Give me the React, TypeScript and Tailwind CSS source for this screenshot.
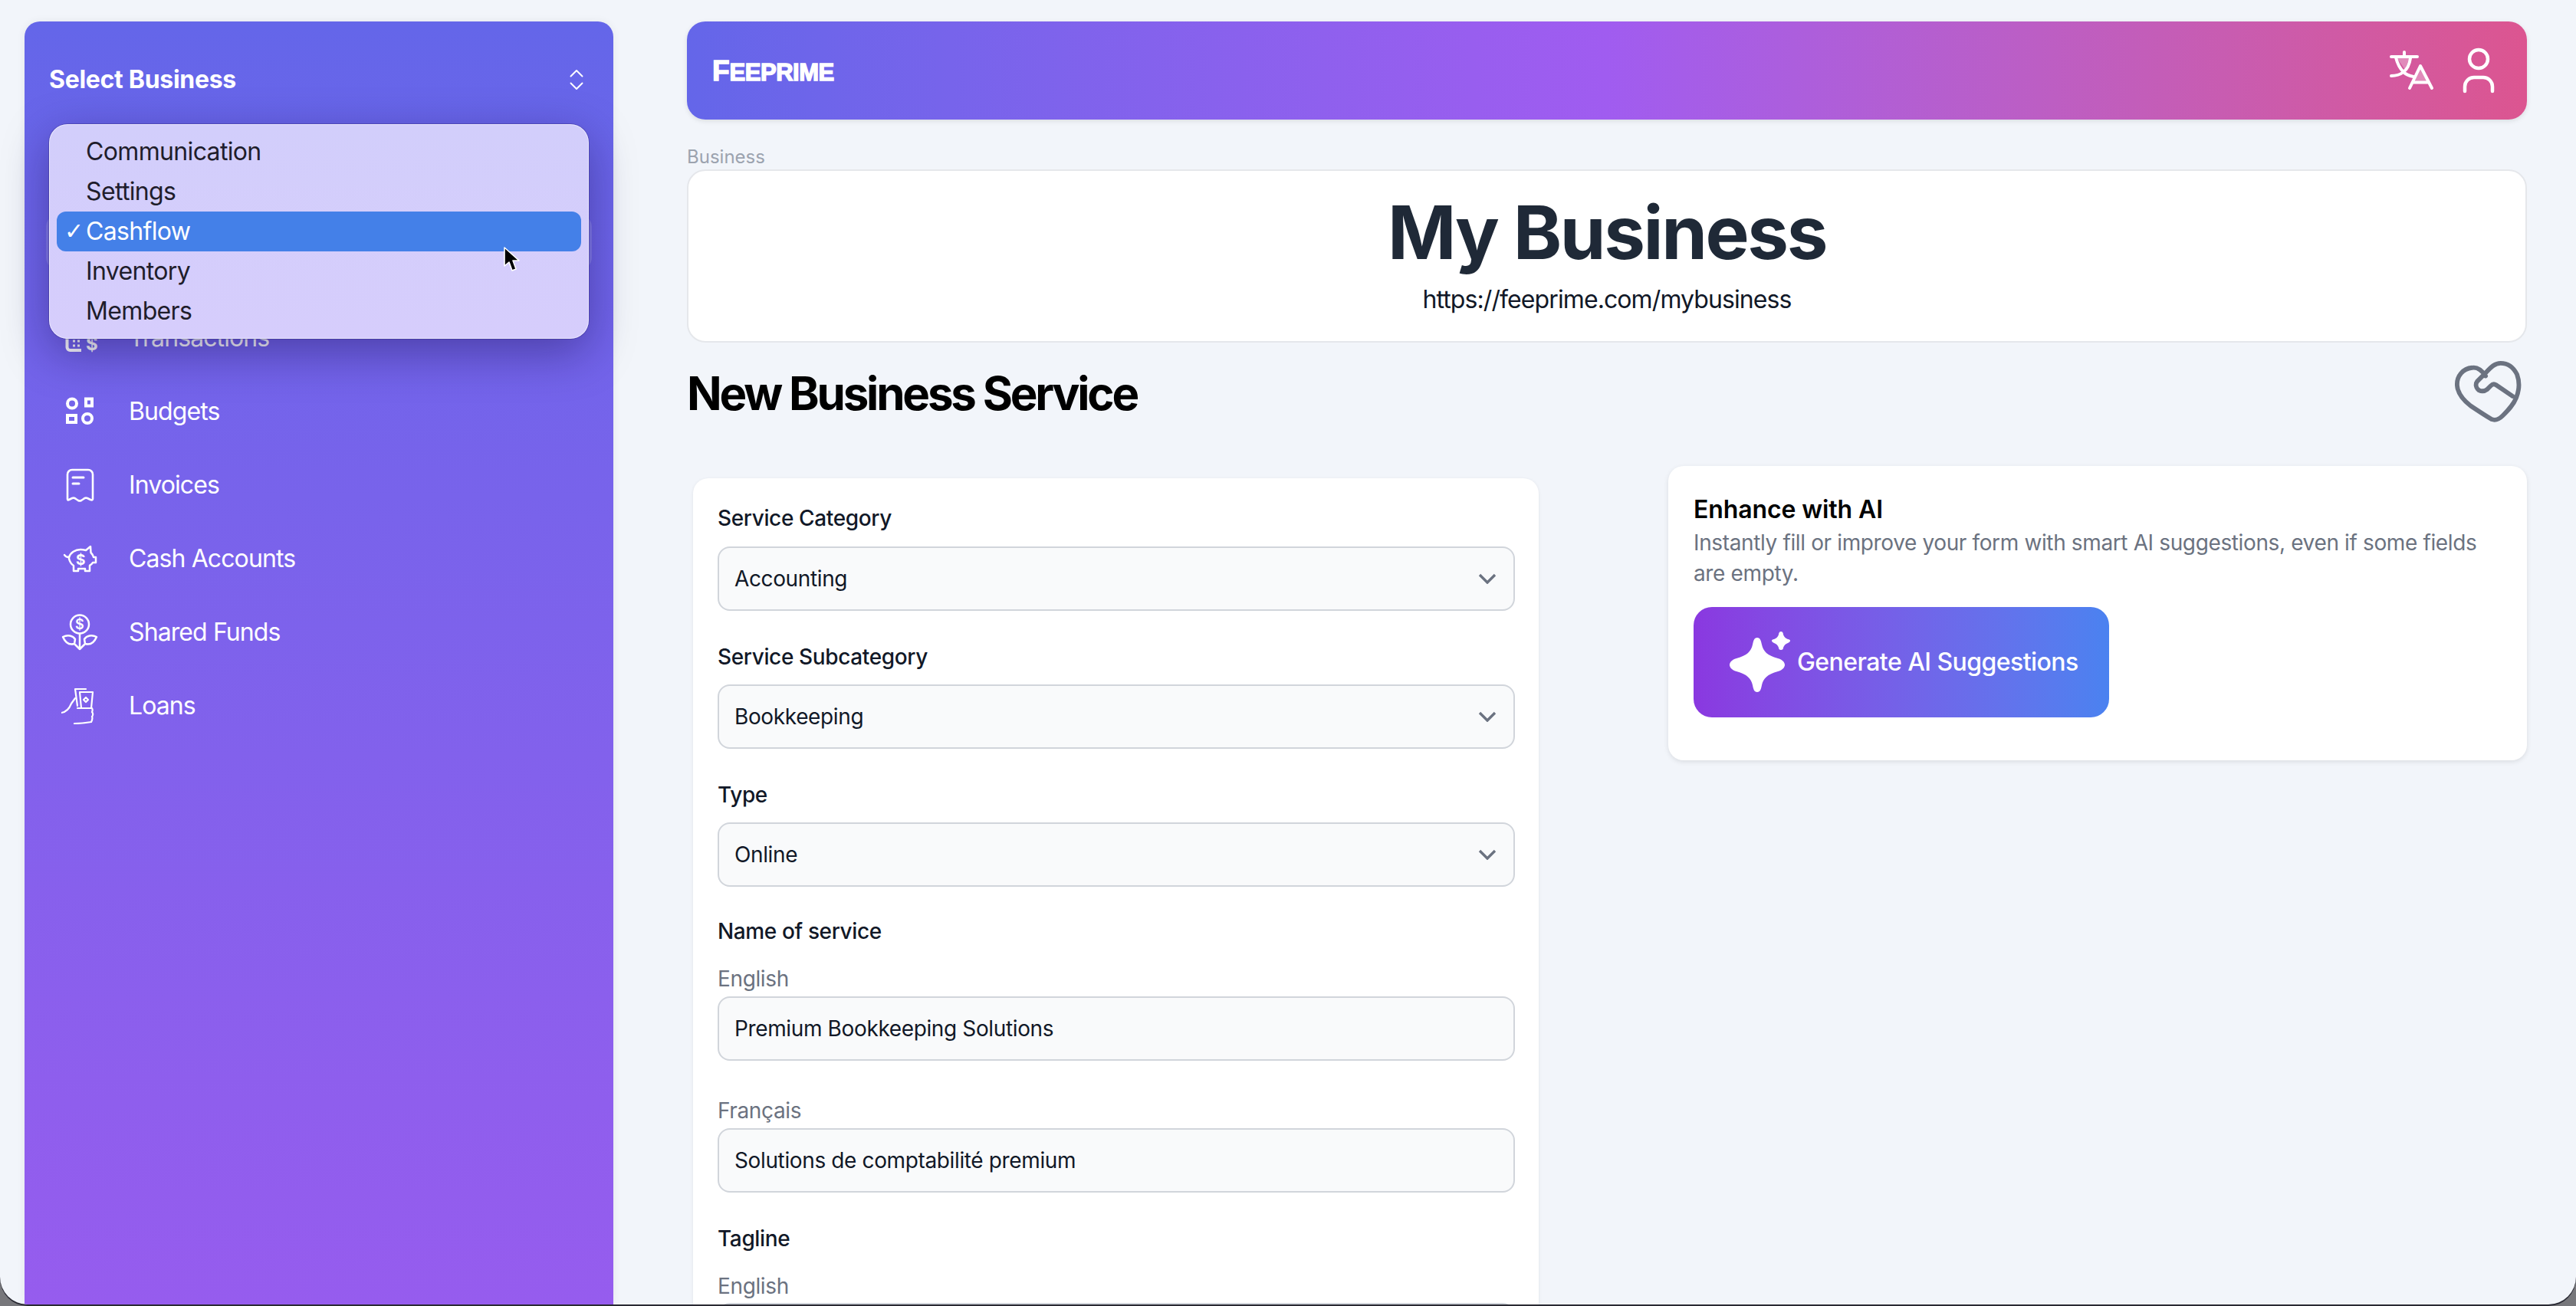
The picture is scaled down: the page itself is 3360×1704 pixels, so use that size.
import type { ReactNode } from "react";
import { ChevronsUpDown } from "lucide-react";
import { TbUser } from "react-icons/tb";

function BudgetsIcon() {
  return (
    <svg viewBox="0 0 48 48" className="h-12 w-12" fill="none" stroke="white" strokeWidth="4">
      <circle cx="14" cy="13.5" r="6" />
      <rect x="32" y="7.5" width="8" height="9" />
      <rect x="8" y="29" width="11" height="9" />
      <circle cx="34" cy="33" r="6" />
    </svg>
  );
}

function TransactionsIcon() {
  return (
    <svg viewBox="0 0 48 48" className="h-12 w-12" fill="none" stroke="white">
      <path d="M7.5 10v26a4 4 0 0 0 4 4H26" strokeWidth="4" />
      <path d="M15 28h3M21 28h3M15 34h3M21 34h3" strokeWidth="3" />
      <text x="32" y="40" fill="white" stroke="none" fontSize="24" fontWeight="700" fontFamily="Inter">
        $
      </text>
    </svg>
  );
}

function InvoicesIcon() {
  return (
    <svg viewBox="0 0 48 48" className="h-12 w-12" fill="none" stroke="white" strokeWidth="2.6" strokeLinejoin="round" strokeLinecap="round">
      <path d="M8 42V10a6 6 0 0 1 6-6h21a6 6 0 0 1 6 6v32q0 2-3 1l-4-2q-3-1-5 1l-3 2q-2 1-4 0l-3-2q-2-2-5-1l-4 2q-2 1-2-1Z" />
      <path d="M15 14h14M15 22h8" strokeWidth="3" />
    </svg>
  );
}

function PiggyIcon() {
  return (
    <svg viewBox="0 0 48 48" className="h-12 w-12" fill="none" stroke="white" strokeWidth="2.5" strokeLinejoin="round" strokeLinecap="round">
      <path d="M10 22c2-6 8-10 15-10 3 0 5 .5 7 1l6-5 .5 8c2 2 3 4 3.5 6h3v7h-4c-1 2-3 3-4 4v7h-6v-3h-9v3h-6v-7c-3-2-5-5-6-9Z" />
      <path d="M10 22c-3 0-5-1-6-3" />
      <text x="19" y="32" fill="white" stroke="none" fontSize="19" fontWeight="700" fontFamily="Inter">
        $
      </text>
    </svg>
  );
}

function FundsIcon() {
  return (
    <svg viewBox="0 0 48 48" className="h-12 w-12" fill="none" stroke="white" strokeWidth="2.5" strokeLinejoin="round" strokeLinecap="round">
      <circle cx="24" cy="13.5" r="12" />
      <text x="18" y="20" fill="white" stroke="none" fontSize="18" fontWeight="600" fontFamily="Inter">
        $
      </text>
      <path d="M24 26v20M18 40l6 6 6-6" />
      <path d="M2 30c6-3 13-2 16 3l-1 6c-7 2-12-2-15-9ZM46 30c-6-3-13-2-16 3l1 6c7 2 12-2 15-9Z" />
    </svg>
  );
}

function LoansIcon() {
  return (
    <svg viewBox="0 0 48 48" className="h-12 w-12" fill="none" stroke="white" strokeWidth="2.2" strokeLinejoin="round" strokeLinecap="round">
      <path d="M18 2h14M18 2l3 22" />
      <path d="M24 6h17l-2 21H26Z" />
      <path d="M32 13l3 3-3 3-3-3Z" />
      <path d="M18 14l-5 7c-2 5-6 11-13 12" />
      <path d="M21 27h19c1 2 1 3 0 5 2 2 1 5 0 6 1 2 0 5-1 7-6 1-14 2-22 2" />
    </svg>
  );
}

function HeartIcon() {
  return (
    <svg viewBox="0 0 90 82" className="h-20 w-[88px]" fill="none" stroke="#6b7280" strokeWidth="6" strokeLinejoin="round" strokeLinecap="round">
      <path d="M42 20C36 11 30 8 24 9 12 10 3 20 4 33c1 12 9 20 18 27 9 6 18 12 28 18 6 2 10 0 15-5 7-7 14-14 18-24 4-10 5-20 1-31C79 8 72 3 62 3c-7 0-12 4-20 13L31 27c-3 4-2 9 2 12 4 2 7 2 11-1l5-5c2-2 4-3 7-1l22 15" />
    </svg>
  );
}

function TranslateIcon() {
  return (
    <svg viewBox="0 0 60 54" className="h-[54px] w-[60px]" fill="none" stroke="white" strokeWidth="4" strokeLinecap="round" strokeLinejoin="round">
      <path d="M10 10h17l-6 16Z" fill="white" fillOpacity="0.3" stroke="none" />
      <path d="M41 22l10 20H31Z" fill="white" fillOpacity="0.3" stroke="none" />
      <path d="M3 9h34M20 3v6" />
      <path d="M9 10c2 8 5 14 10 19 3 3 8 5 13 6" />
      <path d="M28 11c-1 7-4 14-9 18-4 3-10 5-16 5" />
      <path d="M27 50l14-29 15 29M32 42.5h20" />
    </svg>
  );
}

function CursorIcon() {
  return (
    <svg viewBox="0 0 22 34" className="h-[34px] w-[22px]">
      <path d="M2 1v24l6-5 4 11 5-2-4-11h8Z" fill="black" stroke="white" strokeWidth="1.6" strokeLinejoin="round" />
    </svg>
  );
}

const navItems: { label: string; icon: ReactNode }[] = [
  { label: "Transactions", icon: <TransactionsIcon /> },
  { label: "Budgets", icon: <BudgetsIcon /> },
  { label: "Invoices", icon: <InvoicesIcon /> },
  { label: "Cash Accounts", icon: <PiggyIcon /> },
  { label: "Shared Funds", icon: <FundsIcon /> },
  { label: "Loans", icon: <LoansIcon /> },
];

const menuItems = ["Communication", "Settings", "Cashflow", "Inventory", "Members"];

function Sidebar() {
  return (
    <aside className="relative w-[768px] shrink-0 rounded-t-[20px] bg-linear-to-b from-[#6466e9] to-[#965cee] shadow-[0_0_12px_rgba(0,0,0,0.06)]">
      <div className="mt-14 flex h-10 items-center justify-between pl-8 pr-[30px] text-[32px] font-bold text-white">
        <span className="tracking-[-0.3px]">Select Business</span>
        <ChevronsUpDown size={36} strokeWidth={1.3} />
      </div>

      {/* active row sits behind the open menu */}
      <div className="mx-7 mt-[156px] h-[72px] rounded-[16px] bg-white/15" />

      <nav className="mx-7 mt-[53px] flex flex-col gap-6">
        {navItems.map((item) => (
          <div key={item.label} className="flex h-[72px] items-center gap-10 pl-5 text-[32px] tracking-[-0.9px] text-white">
            {item.icon}
            <span>{item.label}</span>
          </div>
        ))}
      </nav>

      {/* open select menu */}
      <div className="absolute left-8 top-[134px] z-10 h-[280px] w-[704px] rounded-[24px] border border-white/50 bg-linear-to-b from-[#d2cefb] to-[#d6cdfc] p-[9px] text-[32px] tracking-[-0.65px] text-[#1f1d2b] shadow-[0_0_0_1px_rgba(50,40,120,0.35),0_18px_60px_rgba(20,10,70,0.4)]">
        {menuItems.map((m) =>
          m === "Cashflow" ? (
            <div key={m} className="flex h-[52px] items-center rounded-[12px] bg-[#4480e8] pl-[10px] text-white">
              <span className="w-[28px] font-['DejaVu_Sans'] text-[30px] leading-none">✓</span>
              {m}
            </div>
          ) : (
            <div key={m} className="flex h-[52px] items-center pl-[38px]">
              {m}
            </div>
          ),
        )}
      </div>

      <div className="absolute left-[624px] top-[294px] z-20">
        <CursorIcon />
      </div>
    </aside>
  );
}

function Header() {
  return (
    <header className="flex h-32 items-center justify-between rounded-[24px] bg-linear-to-r from-[#6466e9] via-[#a05cf0] to-[#dc5590] pl-[33px] pr-[27px] shadow-[0_2px_6px_rgba(0,0,0,0.1)]">
      <span className="flex items-baseline font-['Liberation_Sans'] font-bold leading-none text-white [-webkit-text-stroke:1.4px_white]">
        <span className="text-[37px]">F</span>
        <span className="text-[31px] uppercase tracking-[-0.5px]">eePrime</span>
      </span>
      <div className="flex items-center gap-[21px] text-white">
        <TranslateIcon />
        <TbUser size={72} strokeWidth={1.5} />
      </div>
    </header>
  );
}

function SelectBox({ value }: { value: string }) {
  return (
    <div className="flex h-[84px] items-center justify-between rounded-[16px] border-2 border-[#d1d5db] bg-[#f9fafb] pl-5 pr-[22px] text-[28px] tracking-[-0.37px] text-[#111827]">
      <span>{value}</span>
      <svg viewBox="0 0 24 14" className="h-[14px] w-6" fill="none" stroke="#6b7280" strokeWidth="3.4">
        <path d="M2 2l10 10L22 2" />
      </svg>
    </div>
  );
}

function TextBox({ value }: { value: string }) {
  return (
    <div className="flex h-[84px] items-center rounded-[16px] border-2 border-[#d1d5db] bg-[#f9fafb] px-5 text-[28px] tracking-[-0.37px] text-[#111827]">
      {value}
    </div>
  );
}

function Label({ children, className }: { children: ReactNode; className: string }) {
  return <div className={`h-10 text-[28px] font-medium leading-10 tracking-[-0.37px] text-[#111827] ${className}`}>{children}</div>;
}

function Sub({ children, className }: { children: ReactNode; className: string }) {
  return <div className={`h-10 text-[28px] leading-10 tracking-[-0.37px] text-[#6b7280] ${className}`}>{children}</div>;
}

function ServiceForm() {
  return (
    <div className="ml-2 mt-4 w-[1103px] shrink-0 rounded-t-[20px] bg-white pb-8 pl-[32px] pr-[31px] pt-8 shadow-[0_1px_4px_rgba(0,0,0,0.08)]">
      <Label className="mb-[17px]">Service Category</Label>
      <SelectBox value="Accounting" />
      <Label className="mb-4 mt-10">Service Subcategory</Label>
      <SelectBox value="Bookkeeping" />
      <Label className="mb-4 mt-10">Type</Label>
      <SelectBox value="Online" />
      <Label className="mt-[38px]">Name of service</Label>
      <Sub className="mb-[3px] mt-[22px]">English</Sub>
      <TextBox value="Premium Bookkeeping Solutions" />
      <Sub className="mb-[3px] mt-[45px]">Français</Sub>
      <TextBox value="Solutions de comptabilité premium" />
      <Label className="mt-10">Tagline</Label>
      <Sub className="mb-[2px] mt-[22px]">English</Sub>
      <TextBox value="" />
    </div>
  );
}

function AiCard() {
  return (
    <div className="h-[384px] flex-1 rounded-[20px] bg-white pl-[33px] pr-8 pt-[37px] shadow-[0_2px_6px_rgba(0,0,0,0.1)]">
      <h3 className="text-[32px] font-semibold leading-10 tracking-[-0.1px] text-black">Enhance with AI</h3>
      <p className="mt-[3px] text-[28px] leading-10 tracking-[-0.37px] text-[#6b7280]">
        Instantly fill or improve your form with smart AI suggestions, even if some fields are empty.
      </p>
      <button className="mt-[24px] flex h-36 w-[542px] items-center rounded-[24px] bg-linear-to-r from-[#8a38e0] to-[#4a82f0] pl-[46px] text-[32px] font-medium tracking-[-0.55px] text-white">
        <svg viewBox="0 0 84 80" className="mr-[5px] h-20 w-[84px]" fill="white">
          <path d="M37 8C41 8 42 12 43 17C45 26 50 31 64 35C71 37 73 41 73 43.5C73 46 71 50 64 52C50 56 45 61 43 70C42 75 41 79 37 79C33 79 32 75 31 70C29 61 24 56 10 52C3 50 1 46 1 43.5C1 41 3 37 10 35C24 31 29 26 31 17C32 12 33 8 37 8Z" />
          <path d="M68 0c2 0 3 2 3 4 1 3 3 5 6 6 2 0 3 1 3 2s-1 2-3 3c-3 1-5 3-6 6 0 2-1 3-3 3s-3-1-3-3c-1-3-3-5-6-6-2-1-3-2-3-3s1-2 3-2c3-1 5-3 6-6 0-2 1-4 3-4Z" />
        </svg>
        <span>Generate AI Suggestions</span>
      </button>
    </div>
  );
}

export default function App() {
  return (
    <div className="h-[1704px] w-[3360px] overflow-hidden bg-[#77777b] font-['Inter',sans-serif]">
      <div className="flex h-[1702px] overflow-hidden rounded-b-[36px] bg-[#f2f5fa] pl-8 pr-16 pt-7 shadow-[0_2px_0_#2a2a33]">
        <Sidebar />
        <main className="ml-24 min-w-0 flex-1">
          <Header />
          <div className="mt-[33px] h-8 text-[24px] leading-8 text-[#9ca3af]">Business</div>
          <section className="h-[226px] rounded-[24px] border-2 border-[#e5e7eb] bg-white pt-[32px] text-center">
            <h1 className="text-[96px] font-bold leading-[96px] tracking-[-2.4px] text-[#1f2937]">My Business</h1>
            <p className="mt-4 text-[32px] leading-[48px] tracking-[-0.9px] text-[#111827]">https://feeprime.com/mybusiness</p>
          </section>
          <div className="mt-6 flex h-20 items-center justify-between pr-[7px]">
            <h2 className="pt-1 text-[60px] font-bold tracking-[-3.2px] text-black">New Business Service</h2>
            <HeartIcon />
          </div>
          <div className="mt-[57px] flex items-start gap-[169px]">
            <ServiceForm />
            <AiCard />
          </div>
        </main>
      </div>
    </div>
  );
}
